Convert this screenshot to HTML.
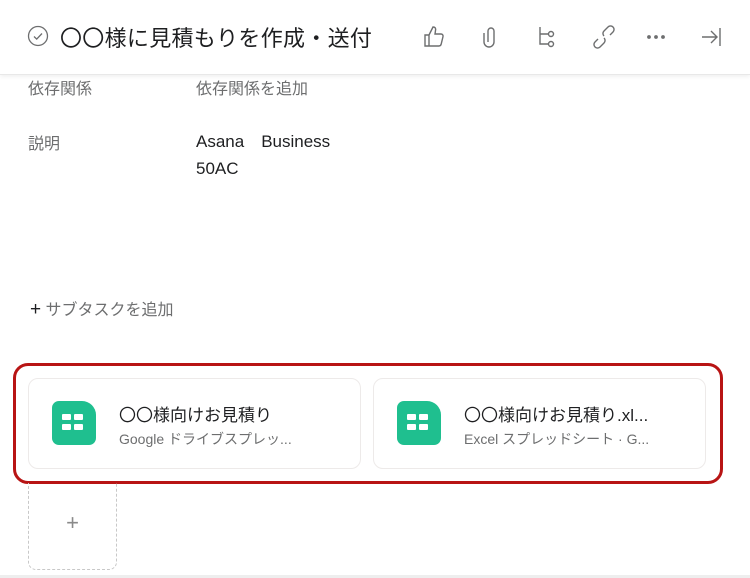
<!DOCTYPE html>
<html><head><meta charset="utf-8"><style>
*{margin:0;padding:0;box-sizing:border-box}
body{width:750px;height:578px;background:#fff;position:relative;overflow:hidden;font-family:"Liberation Sans","Noto Sans CJK JP",sans-serif;color:#1e1f21}
.abs{position:absolute}
.hdr{left:0;top:0;width:750px;height:75px;background:#fff;border-bottom:1px solid #e8e8e8;box-shadow:0 2px 4px rgba(0,0,0,0.06)}
.lbl{font-size:16px;color:#6d6e6f}
.card{background:#fff;border:1px solid #edeae9;border-radius:10px;height:91px;top:378px;width:333px}
.gi{left:23px;top:22px;width:44px;height:44px;background:#1fbf8f;border-radius:7px 14px 7px 7px}
.gi i{position:absolute;width:9px;height:6px;background:#fff;border-radius:1px}
.t1{font-size:17px;color:#1e1f21;top:22px;left:90px}
.t2{font-size:14px;color:#6d6e6f;top:50px;left:90px}
</style></head><body>
<div class="abs hdr">
<svg class="abs" style="left:27px;top:25px" width="22" height="22" viewBox="0 0 22 22"><circle cx="11" cy="11" r="9.5" fill="none" stroke="#6d6e6f" stroke-width="1.3"/><path d="M7 11.5l2.7 2.6L15 8.5" fill="none" stroke="#6d6e6f" stroke-width="1.3"/></svg>
<div class="abs" style="left:60px;top:21px;font-size:22px;color:#1e1f21;letter-spacing:0.3px">〇〇様に見積もりを作成・送付</div>
<svg class="abs" style="left:422px;top:24px" width="300" height="26" viewBox="0 0 300 26" fill="none" stroke="#6d6e6f" stroke-width="1.4">
<path d="M3 11h4v11H3zM7 11l4-8c2 0 3 1 2.5 3.5L13 10h6c1.5 0 2.3 1.3 2 2.6l-1.8 7.5c-.3 1.2-1.2 1.9-2.3 1.9H7"/>
<path d="M66 18V7a3 3 0 016 0v11a5 5 0 01-10 0V9"/>
<path d="M118 3v17h8M118 10h8"/><circle cx="129" cy="10" r="2.5"/><circle cx="129" cy="20" r="2.5"/>
<path d="M176 15l-3 3a3.5 3.5 0 005 5l4-4a3.5 3.5 0 000-5M188 11l3-3a3.5 3.5 0 00-5-5l-4 4a3.5 3.5 0 000 5"/>
<circle cx="227" cy="13" r="1.2" fill="#6d6e6f"/><circle cx="234" cy="13" r="1.2" fill="#6d6e6f"/><circle cx="241" cy="13" r="1.2" fill="#6d6e6f"/>
<path d="M280 13h15M289 7l6 6-6 6M298 4v18"/>
</svg>
</div>
<div class="abs lbl" style="left:28px;top:75px">依存関係</div>
<div class="abs lbl" style="left:196px;top:75px">依存関係を追加</div>
<div class="abs lbl" style="left:28px;top:130px">説明</div>
<div class="abs" style="left:196px;top:128px;font-size:17px;line-height:27px">Asana　Business<br>50AC</div>
<div class="abs lbl" style="left:30px;top:296px"><span style="color:#1e1f21;font-size:19px">+</span> サブタスクを追加</div>
<div class="abs" style="left:13px;top:363px;width:710px;height:121px;border:3px solid #b81414;border-radius:15px"></div>
<div class="abs card" style="left:28px"><div class="abs gi"><i style="left:10px;top:13px"></i><i style="left:22px;top:13px"></i><i style="left:10px;top:23px"></i><i style="left:22px;top:23px"></i></div><div class="abs t1">〇〇様向けお見積り</div><div class="abs t2">Google ドライブスプレッ...</div></div>
<div class="abs card" style="left:373px"><div class="abs gi"><i style="left:10px;top:13px"></i><i style="left:22px;top:13px"></i><i style="left:10px;top:23px"></i><i style="left:22px;top:23px"></i></div><div class="abs t1">〇〇様向けお見積り.xl...</div><div class="abs t2">Excel スプレッドシート · G...</div></div>
<div class="abs" style="left:28px;top:483px;width:89px;height:87px;border:1px dashed #c8c8c8;border-top:none;border-radius:0 0 8px 8px;text-align:center;line-height:80px;font-size:22px;color:#8a8a8a">+</div>
<div class="abs" style="left:0;top:575px;width:750px;height:3px;background:#eee"></div>
</body></html>
